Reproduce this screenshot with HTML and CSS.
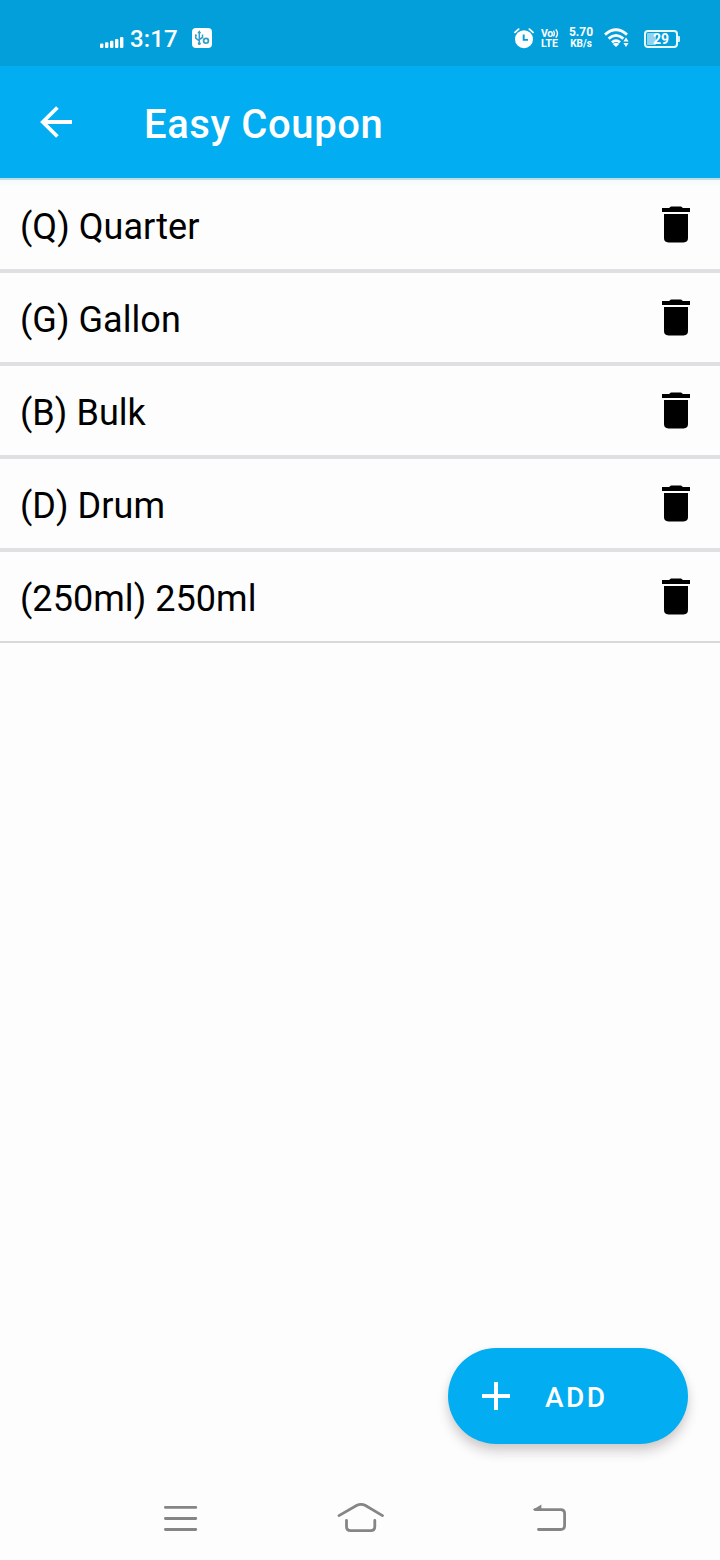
FILE: index.html
```html
<!DOCTYPE html>
<html lang="en">
<head>
<meta charset="utf-8">
<title>Easy Coupon</title>
<link rel="stylesheet" href="styles.css">
</head>
<body>
<div class="screen">
  <div class="status">
    <svg class="signal" width="24" height="12" viewBox="0 0 24 12" fill="#fff"><rect x="0" y="6.5" width="3.4" height="4.5" rx="1"/><rect x="5" y="5.2" width="3.4" height="5.8" rx="1"/><rect x="10" y="3.8" width="3.4" height="7.2" rx="1"/><rect x="15" y="2" width="3.4" height="9" rx="1"/><rect x="20" y="0" width="3.4" height="11" rx="1"/></svg>
    <span class="time">3:17</span>
    <svg class="usb" width="20" height="20" viewBox="0 0 20 20"><rect width="20" height="20" rx="4" fill="#fff"/><g fill="none" stroke="#329dc6" stroke-width="1.5"><path d="M7.3 4v12M3.8 7v3.2l3.5 2.6M10.5 6.5v3L7.3 11.5"/><circle cx="14" cy="12.8" r="2.4" stroke-width="1.8"/></g><path d="M7.3 2.2l2 3h-4z" fill="#329dc6"/><circle cx="7.3" cy="15.5" r="1.5" fill="#329dc6"/><circle cx="3.8" cy="7.2" r="1" fill="#329dc6"/></svg>
    <span class="gap"></span>
    <svg class="alarm" width="20" height="21" viewBox="0 0 20 21"><circle cx="10" cy="11.2" r="9" fill="#fff"/><path d="M1 4.4L4.6 1.2M19 4.4L15.4 1.2" stroke="#fff" stroke-width="1.8" stroke-linecap="round"/><path d="M9.7 6.4v5.5h4.3" fill="none" stroke="#029dd8" stroke-width="1.9"/></svg>
    <span class="stack volte"><span class="vo">Vo<svg width="6" height="9" viewBox="0 0 6 9" fill="none" stroke="#fff" stroke-width="1.4"><path d="M.4 1.6q2 2.9 0 5.8M2.8.4q3.4 4 0 8.2"/></svg></span><span>LTE</span></span>
    <span class="stack speed"><span class="rate">5.70</span><span class="unit">KB/s</span></span>
    <svg class="wifi" width="25" height="20" viewBox="0 0 25 20"><g fill="none" stroke="#fff" stroke-width="2.8"><path d="M1 6.6Q12 -3 23 6.6"/><path d="M4.6 10.6Q12 4.2 19.4 10.6"/><path d="M8 14.4Q12 10.8 16 14.4"/></g><path d="M8.8 15.9Q12 13.6 15.2 15.9L12 19z" fill="#fff"/><path d="M22 9.5l2.6 4h-5.2zM22 19l2.6-4h-5.2z" fill="#fff"/></svg>
    <span class="battery"><span class="shell"><span class="charge"></span><span class="level">29</span></span><span class="cap"></span></span>
  </div>
  <header class="appbar">
    <svg class="back" width="32" height="32" viewBox="0 0 32 32" fill="none" stroke="#fff" stroke-width="3.8"><path d="M32 16H3M17.4 1.5L2.8 16l14.6 14.5"/></svg>
    <h1 class="title">Easy Coupon</h1>
  </header>
  <ul class="list">
    <li class="row"><span>(Q) Quarter</span><svg class="trash" width="28" height="37" viewBox="0 0 28 37"><path d="M0 2H7L9 0.4H19L21 2H28V6H0zM2 8H26V32Q26 36.4 21.6 36.4H6.4Q2 36.4 2 32z"/></svg></li>
    <li class="row"><span>(G) Gallon</span><svg class="trash" width="28" height="37" viewBox="0 0 28 37"><path d="M0 2H7L9 0.4H19L21 2H28V6H0zM2 8H26V32Q26 36.4 21.6 36.4H6.4Q2 36.4 2 32z"/></svg></li>
    <li class="row"><span>(B) Bulk</span><svg class="trash" width="28" height="37" viewBox="0 0 28 37"><path d="M0 2H7L9 0.4H19L21 2H28V6H0zM2 8H26V32Q26 36.4 21.6 36.4H6.4Q2 36.4 2 32z"/></svg></li>
    <li class="row"><span>(D) Drum</span><svg class="trash" width="28" height="37" viewBox="0 0 28 37"><path d="M0 2H7L9 0.4H19L21 2H28V6H0zM2 8H26V32Q26 36.4 21.6 36.4H6.4Q2 36.4 2 32z"/></svg></li>
    <li class="row"><span>(250ml) 250ml</span><svg class="trash" width="28" height="37" viewBox="0 0 28 37"><path d="M0 2H7L9 0.4H19L21 2H28V6H0zM2 8H26V32Q26 36.4 21.6 36.4H6.4Q2 36.4 2 32z"/></svg></li>
  </ul>
  <button class="add"><svg width="28" height="28" viewBox="0 0 28 28" fill="none" stroke="#fff" stroke-width="4"><path d="M14 0v28M0 14h28"/></svg><span>ADD</span></button>
  <nav class="nav">
    <svg class="menu" width="34" height="28" viewBox="0 0 34 28" fill="none" stroke="#858585" stroke-width="2.8" stroke-linecap="round"><path d="M1.4 2.4h30.4M1.4 13.5h30.4M1.4 24.5h30.4"/></svg>
    <svg class="home" width="48" height="30" viewBox="0 0 48 30" fill="none" stroke="#858585" stroke-width="2.8" stroke-linecap="round"><path d="M2 13.6L19.5 3.5Q24 1.3 28.5 3.5L45.5 13.6M9.5 18.3V24.5Q9.5 28.6 13.6 28.6H33.7Q37.8 28.6 37.8 24.5V18.3"/></svg>
    <svg class="return" width="36" height="28" viewBox="0 0 36 28" fill="none" stroke="#858585" stroke-width="2.8" stroke-linecap="round"><path d="M3 5.6H28.6Q32.6 5.6 32.6 9.6V21.5Q32.6 25.5 28.6 25.5H6.5"/><path d="M.5 6L9.4 .5V6z" fill="#858585" stroke="none"/></svg>
  </nav>
</div>
</body>
</html>
```
FILE: styles.css
```css
* { box-sizing: border-box; }
body { margin: 0; font-family: Roboto, sans-serif; background: #fdfdfd; }
.screen { width: 720px; height: 1560px; display: flex; flex-direction: column; overflow: hidden; }
.status { height: 66px; flex: none; background: #029fdb; color: #fff; display: flex; align-items: flex-start; padding: 0 40px 0 100px; }
.signal { margin-top: 37px; }
.time { margin: 25px 0 0 6px; width: 48px; font-size: 24px; line-height: 28px; font-weight: 500; letter-spacing: .1px; white-space: nowrap; }
.usb { margin: 28px 0 0 14px; }
.gap { flex: 1; }
.alarm { margin-top: 28px; }
.stack { display: flex; flex-direction: column; margin-top: 28px; font-weight: 700; font-size: 10.5px; line-height: 11px; white-space: nowrap; }
.volte { width: 19px; margin-left: 7px; }
.vo { display: flex; align-items: center; letter-spacing: -.3px; height: 10px; }
.speed { width: 24px; margin: 27px 0 0 9px; align-items: center; }
.rate { font-size: 12px; }
.unit { font-size: 10px; }
.wifi { margin: 28px 0 0 11px; }
.battery { margin: 30px 0 0 15px; width: 36px; display: flex; align-items: center; }
.shell { width: 34px; height: 18px; border: 2px solid #e8fbff; border-radius: 4px; display: grid; grid-template-columns: 28px; padding: 1px; }
.charge { grid-area: 1 / 1; width: 9px; height: 12px; background: #8fd3f1; border-radius: 1px; }
.level { grid-area: 1 / 1; text-align: center; font-size: 14px; line-height: 13px; font-weight: 700; }
.cap { width: 2px; height: 6px; background: #c9f0fb; border-radius: 0 1px 1px 0; }
.appbar { height: 112px; flex: none; background: #02adf1; color: #fff; display: flex; align-items: center; padding-left: 40px; }
.title { margin: 6px 0 0 72px; font-size: 40px; line-height: 48px; font-weight: 500; letter-spacing: .6px; }
.list { list-style: none; margin: 0; padding: 0; flex: 1; border-top: 2px solid #c3dce2; background: linear-gradient(#f3fafa, #fdfdfd 7px); }
.row { height: 93px; display: flex; align-items: flex-start; justify-content: space-between; border-bottom: 4px solid #e0dfe1; padding: 26px 30px 0 20px; font-size: 36px; line-height: 42px; letter-spacing: .05px; color: #000; }
.row:last-child { height: 91px; border-bottom: 2px solid #d9d9d9; }
.add { width: 240px; height: 96px; flex: none; align-self: flex-end; margin: 0 32px 32px 0; border: 0; border-radius: 48px; background: #02adf1; color: #fff; display: flex; align-items: center; padding: 0 0 0 34px; gap: 35px; font-family: Roboto, sans-serif; font-size: 28px; font-weight: 500; letter-spacing: 2.5px; box-shadow: 0 8px 12px rgba(60, 40, 40, .2), 0 2px 8px rgba(0, 0, 0, .05); }
.add span { padding-top: 3px; }
.nav { height: 84px; flex: none; display: flex; align-items: flex-start; padding: 29px 0 0 164px; }
.home { margin: -3px 0 0 139px; }
.return { margin: -1px 0 0 147px; }
```
